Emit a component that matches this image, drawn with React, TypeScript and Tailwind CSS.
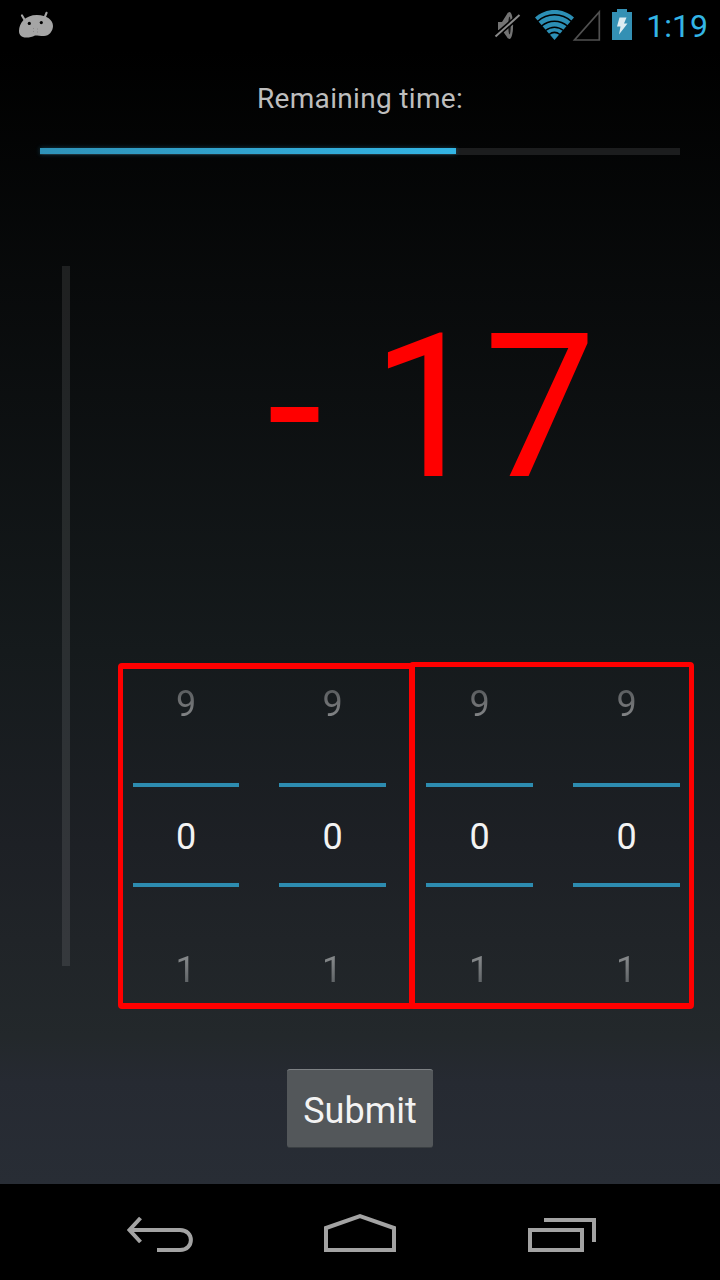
function StatusBar() {
  return (
    <header className="flex h-[50px] shrink-0 items-start bg-black">
      <svg className="ml-4 h-[50px] w-10" viewBox="16 0 40 50">
        <path d="M22 15.500l3 5M46.500 12.800l-2 5" stroke="#a5a5a5" strokeWidth="2.200" strokeLinecap="round" />
        <path d="M19 31c0-8 6-16 18-16 10 0 16 5 16 11 0 5-4 10-9 10-4 0-6-.5-9-.5-3 1.500-5 2-9 2-4.500 0-7-2.500-7-6.500z" fill="#a5a5a5" />
        <circle cx="29.300" cy="23.400" r="1.600" fill="#000" />
        <circle cx="41.300" cy="22.600" r="1.600" fill="#000" />
        <path d="M33 28.500h1M37 29h1M33 31.500h1M37 32h1" stroke="#888" />
      </svg>
      <svg className="ml-auto h-[50px] w-[160px]" viewBox="480 0 160 50">
        <path d="M498 22h4l6-9.500c5 1.500 5 25 0 26L502 30h-4z" fill="#737373" />
        <ellipse cx="509.500" cy="25.500" rx="3.600" ry="13.500" fill="#737373" />
        <ellipse cx="509.500" cy="25.500" rx="1.200" ry="9" fill="#151515" />
        <path d="M494.500 37L519.500 15.500" stroke="#000" strokeWidth="5" />
        <path d="M495.500 36.500L519.500 15" stroke="#8a8a8a" strokeWidth="2" />
        <path d="M535 17.500C546 7.500 563 7.500 574 17.500L554.500 40z" fill="#2c8fb5" />
        <g fill="none" stroke="#000" strokeWidth="1.500">
          <path d="M537.500 21.500C547 12.500 562 12.500 571.500 21.500" />
          <path d="M541.500 26C549 19.500 560 19.500 567.500 26" />
          <path d="M545.500 30.500C551 26 558 26 563.500 30.500" />
          <path d="M549 34.500C552.500 31.800 556.500 31.800 560 34.500" />
        </g>
        <path d="M574.500 40H599.300V12z" fill="none" stroke="#505050" strokeWidth="1.700" />
        <path d="M612 12h5V9h10v3h5v28h-20z" fill="#3490b4" />
        <path d="M619.500 17.500h7l-2.500 6h3.500L619 34.500l1.500-8h-3.500z" fill="#dcecf2" />
      </svg>
      <span className="ml-[6px] mr-[12px] mt-[6px] text-[32px] leading-[40px] text-[#33b5e5]">1:19</span>
    </header>
  );
}

function NumberPicker() {
  return (
    <div className="flex flex-col items-center text-[36px] leading-[42px] text-[#f3f3f3]">
      <span className="mt-[14px] bg-linear-to-b/srgb from-[#5c5f61] from-20% to-[#828486] to-80% bg-clip-text text-transparent">9</span>
      <div className="mt-[58px] flex h-[104px] w-full items-center justify-center border-y-4 border-[#2d8cb0]">
        <span className="mt-[4px]">0</span>
      </div>
      <span className="mr-[1px] mt-[62px] bg-linear-to-b/srgb from-[#85888a] from-20% to-[#606467] to-80% bg-clip-text text-transparent">1</span>
    </div>
  );
}

function NavigationBar() {
  return (
    <nav className="h-24 shrink-0 bg-black">
      <svg className="h-24 w-full" viewBox="0 1184 720 96" fill="none" stroke="#a3a3a3" strokeWidth="4">
        <path d="M140.500 1218l-11 12 11 12M130 1230h50c14.500 0 14.500 20 0 20h-23" />
        <path d="M326 1250v-22l34-11.800 34 11.800V1250z" />
        <path d="M530 1230h52v20h-52zM544 1220h50v22" />
      </svg>
    </nav>
  );
}

export default function App() {
  return (
    <div className="flex h-[1280px] w-[720px] flex-col overflow-hidden bg-black font-['Roboto',sans-serif]">
      <StatusBar />
      <main className="flex flex-1 flex-col items-center bg-[linear-gradient(to_bottom,#000_0%,#151a1c_53%,#1d2025_70%,#23282b_87%,#262a32_91%,#282d35_100%)]">
        <h1 className="mt-[32px] text-[28px] font-normal leading-[34px] tracking-[0.320px] text-[#bebebe]">Remaining time:</h1>
        <div className="mt-[32px] h-[7px] w-[640px] bg-[#1c1d1e]">
          <div className="h-1.5 w-[416px] bg-linear-to-r/srgb from-[#2f93b9] to-[#33b5e5] shadow-[0_0_5px_#33b5e555]" />
        </div>
        <div className="mt-[111px] flex h-[743px] w-full">
          <div className="ml-[62px] h-[700px] w-2 bg-[#ffffff18]" />
          <div className="ml-[48px] flex w-[576px] flex-col">
            <div className="flex h-[396px] text-[200px] leading-[234px] text-[#ff0000]">
              <span className="ml-[149px] mt-[24px]">-</span>
              <span className="ml-[49px] mt-[25px]">17</span>
            </div>
            <div className="flex items-end">
              <div className="grid h-[346px] w-[296px] grid-cols-[106px_107px] content-start gap-10 rounded-[4px] border-x-[5px] border-y-[6px] border-[#ff0000] pl-[10px]">
                <NumberPicker />
                <NumberPicker />
              </div>
              <div className="-ml-[5px] grid h-[347px] w-[285px] grid-cols-[107px_107px] content-start gap-10 rounded-[4px] border-b-[6px] border-l-[6px] border-r-[5px] border-t-[5px] border-[#ff0000] pl-[11px] pt-[2px]">
                <NumberPicker />
                <NumberPicker />
              </div>
            </div>
          </div>
        </div>
        <button className="mt-[60px] h-[79px] w-[146px] rounded-[3px] border-b border-t border-b-[#3a3f42] border-t-[#7d8184] bg-[#53575a] pt-[4px] text-[36px] leading-[42px] text-[#f3f3f3]">Submit</button>
      </main>
      <NavigationBar />
    </div>
  );
}
